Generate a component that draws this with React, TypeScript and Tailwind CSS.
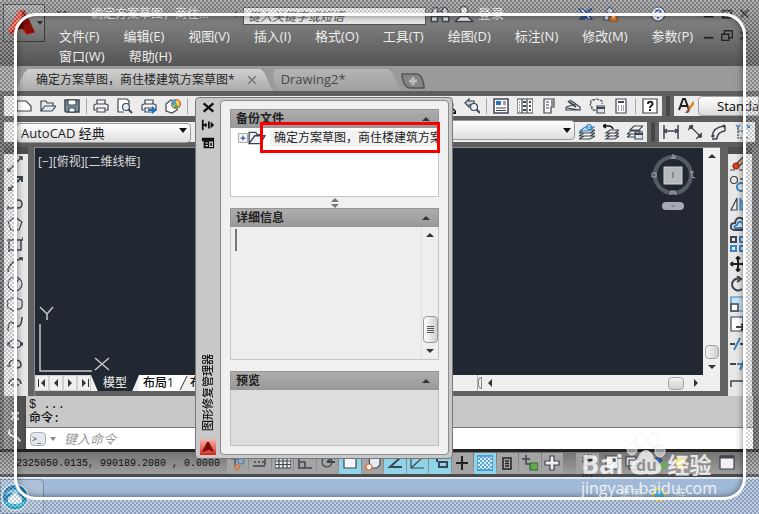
import type { ReactNode } from "react";

const ink = "#3f4650";
const blue = "#3b86c4";

type IconProps = { children: ReactNode; className?: string };

function Icon({ children, className = "size-4" }: IconProps) {
  return (
    <svg
      viewBox="0 0 16 16"
      className={`${className} shrink-0`}
      fill="none"
      stroke={ink}
      strokeWidth="1.2"
      aria-hidden="true"
    >
      {children}
    </svg>
  );
}

function Tool({ label, children }: { label: string; children: ReactNode }) {
  return (
    <button type="button" aria-label={label} className="flex h-5 w-6 shrink-0 items-center justify-center">
      <Icon>{children}</Icon>
    </button>
  );
}

function Sep() {
  return <span className="mx-[2px] h-4 w-px shrink-0 bg-[#a5a5a5]" />;
}

function Grip() {
  return <span className="h-5 w-3 shrink-0 border-x-4 border-[#646464] bg-[#474747]" />;
}

const menus = [
  "文件(F)",
  "编辑(E)",
  "视图(V)",
  "插入(I)",
  "格式(O)",
  "工具(T)",
  "绘图(D)",
  "标注(N)",
  "修改(M)",
  "参数(P)",
  "窗口(W)",
  "帮助(H)",
];

function Logo({ className }: { className: string }) {
  return (
    <svg viewBox="0 0 24 24" className={className} aria-hidden="true">
      <path d="M9 1h5l9 19-7 2-4-5-5 1-4 4-3-3z" fill="#b3180e" />
      <path d="M9 1h2l2 7-8 9-4 3-1-1z" fill="#e4513c" />
      <path d="M11 8l5 8-9 2z" fill="#5d0b08" />
      <path d="M14 1l9 19-7 1-5-13z" fill="#8a0f0a" />
    </svg>
  );
}

function Header() {
  return (
    <header className="flex min-h-[66px] bg-linear-to-b from-[#919191] via-[#757575] to-[#545454] text-[13px] text-[#eeeeee]">
      <button
        type="button"
        aria-label="应用程序菜单"
        className="mt-1 ml-[3px] flex h-[38px] w-[42px] shrink-0 items-center border border-[#3c3c3c] bg-linear-to-b from-[#a2a2a2] to-[#6d6d6d] pl-1"
      >
        <Logo className="size-7" />
        <svg viewBox="0 0 6 4" className="ml-px w-[6px]" aria-hidden="true">
          <path d="M0 0h6L3 4z" fill="#2a2f36" />
        </svg>
      </button>
      <div className="flex-1">
        <div className="flex h-[26px] items-center pt-[2px]">
          <svg viewBox="0 0 10 6" className="ml-3 w-[10px]" aria-hidden="true">
            <path d="M0 0h4L2 5zM6 0h4L8 5z" fill="#333" />
          </svg>
          <h1 className="ml-6 w-36 text-xs">确定方案草图，商住...</h1>
          <svg viewBox="0 0 4 6" className="mr-1 ml-auto w-1" aria-hidden="true">
            <path d="M0 0l4 3-4 3z" fill="#222" />
          </svg>
          <input
            aria-label="搜索"
            placeholder="键入关键字或短语"
            className="mt-1 h-[18px] w-[183px] border border-[#555] bg-[#e8e8e8] px-1 text-xs italic placeholder:text-[#555]"
          />
          <button type="button" aria-label="查找" className="ml-1">
            <Icon className="size-5">
              <path d="M1 14V8l2-5h3v11zM15 14V8l-2-5h-3v11zM6 6h4v4H6zM1 10h5M10 10h5" fill="#ddd" />
            </Icon>
          </button>
          <button type="button" className="ml-1 flex w-[68px] items-center gap-1 whitespace-nowrap">
            <Icon className="size-5">
              <circle cx="8" cy="5" r="3" fill="#eee" />
              <path d="M1 14l4-4h6l4 4z" fill="#eee" />
            </Icon>
            登录
          </button>
          <button type="button" aria-label="Exchange" className="ml-14">
            <Icon>
              <path d="M1 3h4l9 10h-4z" fill="#dbe8ff" stroke="#1d3b7c" />
              <path d="M14 3h-3L2 13h4z" fill="#3564b8" stroke="#1d3b7c" />
            </Icon>
          </button>
          <button type="button" aria-label="共享" className="ml-2">
            <Icon>
              <path d="M8 1l4 4-4 4-4-4zM2 9h5v5H2z" fill="#cfd9ea" stroke="#31456d" />
              <path d="M8 7h7v8H8z" fill="#e08026" stroke="#a34c0b" />
              <path d="M11.500 8v4" stroke="#fff" strokeWidth="2" />
            </Icon>
          </button>
          <button type="button" aria-label="帮助" className="ml-8">
            <Icon>
              <circle cx="8" cy="8" r="7" fill="#eef4ff" />
              <path d="M5.500 6.500c0-3 5-3 5 0 0 1.500-2.500 1.500-2.500 3.500m0 1v1.500" stroke="#2858b0" strokeWidth="2" />
            </Icon>
          </button>
          <div className="mr-3 ml-9 flex gap-1">
            <Icon className="size-[14px]">
              <path d="M2 11h11" stroke="#222" strokeWidth="2" />
            </Icon>
            <Icon className="size-[14px]">
              <path d="M3 12V4h10v8z" stroke="#222" strokeWidth="2" />
            </Icon>
            <Icon className="size-[14px]">
              <path d="M3 3l9 9M12 3l-9 9" stroke="#222" strokeWidth="2" />
            </Icon>
          </div>
        </div>
        <div className="flex">
          <nav className="flex flex-1 flex-wrap gap-x-6 pl-[14px] leading-5">
            {menus.map((m) => (
              <button type="button" key={m}>
                {m}
              </button>
            ))}
          </nav>
          <div className="flex h-5 items-center gap-1 pr-3">
            <Icon className="size-[14px]">
              <path d="M2 10h11" stroke="#222" strokeWidth="2" />
            </Icon>
            <Icon className="size-[14px]">
              <path d="M2 6h8v7H2zM5 6V2h9v8h-4" stroke="#222" strokeWidth="1.500" />
            </Icon>
            <Icon className="size-[14px]">
              <path d="M3 3l9 9M12 3l-9 9" stroke="#333" strokeWidth="2" />
            </Icon>
          </div>
        </div>
      </div>
    </header>
  );
}

function FileTabs() {
  return (
    <div className="flex h-[30px] items-start border-b-[5px] border-[#5e5e5e] bg-[#9a9a9a] pt-[3px] text-xs">
      <button
        type="button"
        className="ml-4 flex h-[22px] items-center gap-3 bg-linear-to-b from-[#d0d0d0] to-[#ababab] pr-4 pl-5 text-[#1f1f1f] [clip-path:polygon(12px_0,calc(100%-12px)_0,calc(100%-8px)_4px,100%_100%,0_100%,8px_4px)]"
      >
        确定方案草图，商住楼建筑方案草图*
        <Icon className="size-[10px]">
          <path d="M2 2l12 12M14 2L2 14" stroke="#777" strokeWidth="2.500" />
        </Icon>
      </button>
      <button
        type="button"
        className="h-[22px] w-32 bg-linear-to-b from-[#b4b4b4] to-[#a0a0a0] pl-2 text-left text-[13px] text-[#484848] [clip-path:polygon(2px_0,calc(100%-12px)_0,calc(100%-8px)_4px,100%_100%,6px_100%,0_8px)]"
      >
        Drawing2*
      </button>
      <button type="button" aria-label="新建图形" className="mt-1">
        <svg viewBox="0 0 24 16" className="h-4 w-6" aria-hidden="true">
          <path d="M1 1h14q7 0 8 14H10Q2 15 1 1z" fill="#858585" stroke="#555" strokeWidth="1.500" />
          <path d="M12 4v8M8 8h8" stroke="#bbb" strokeWidth="3" />
        </svg>
      </button>
    </div>
  );
}

function PlotPrinter() {
  return <path d="M4 6V2h8v4M3 12H1V7l2-1h10l2 1v5h-2M4 10h8v4H4z" fill="#f4f4f4" />;
}

function Toolbars() {
  return (
    <div className="flex flex-col gap-[6px] bg-[#5e5e5e] pb-[5px]">
      <div className="flex pl-1">
        <div className="flex h-5 flex-1 items-center bg-[#ececec] pl-2">
          <Tool label="新建">
            <path d="M1 3h9l5 5v5H1z" fill="#fff" />
          </Tool>
          <Tool label="打开">
            <path d="M1 13V3h5l1 2h6v3M1 13l4-5h11l-4 5z" fill="#e4ebf0" />
          </Tool>
          <Tool label="保存">
            <path d="M1 2h14v12H2l-1-1z" fill="#7f8fa3" strokeWidth="1.500" />
            <path d="M4 2h8v5H4zM5 10h6v4H5z" fill="#fff" />
          </Tool>
          <Sep />
          <Tool label="打印">
            <PlotPrinter />
          </Tool>
          <Tool label="打印预览">
            <path d="M12 6V3l-2-2H1v13h6" fill="#fff" />
            <circle cx="9" cy="9" r="3.500" fill="#e3f0f8" />
            <path d="M11.500 11.500L15 15" strokeWidth="2" />
          </Tool>
          <Tool label="发布">
            <PlotPrinter />
            <path d="M7 11h4V8l5 4-5 4v-3H7z" fill="#1f70c1" stroke="none" />
          </Tool>
          <Tool label="三维打印">
            <path d="M1 6l5-4 6 2v8l-5 3-6-2z" fill="#fff" />
            <circle cx="11" cy="6" r="4.500" fill="#f2c84b" stroke="#ce5149" />
            <path d="M11 1.500A4.500 4.500 0 0 0 7 8l4-2z" fill="#43a9cf" stroke="none" />
            <path d="M11 6l-3 4q4 2 6-1z" fill="#55a65a" stroke="none" />
          </Tool>
          <Sep />
          <span className="flex-1" />
          <Tool label="窗口缩放">
            <circle cx="9" cy="7" r="4" fill="#e9f3f8" />
            <path d="M12 10l3 3" strokeWidth="2" />
            <path d="M12 16h4v-4z" fill="#111" stroke="none" />
          </Tool>
          <Tool label="缩放上一个">
            <path d="M1 5l4-4v2h5v4H5v2z" fill="#c6d5e1" />
            <circle cx="10" cy="9" r="3.500" fill="#e9f3f8" />
            <path d="M12.500 11.500L16 15" strokeWidth="2" />
          </Tool>
          <Sep />
          <Tool label="特性">
            <path d="M1 1h14v14H1z" fill="#fff" strokeWidth="1.500" />
            <path d="M3 3h5v4H3z" fill="#2473c6" stroke="none" />
            <path d="M3 10h10M3 12.500h10M10 4h3M10 6h3" />
          </Tool>
          <Tool label="设计中心">
            <path d="M0 1h16v14H0z" fill="#fff" />
            <path d="M5 1v14M2 4h1M2 7h1M2 10h1M2 13h1M10 1v14" />
            <path d="M6 4h3M6 8h3M6 12h3M12 4h2M12 8h2M12 12h2" strokeWidth="2" />
          </Tool>
          <Tool label="工具选项板">
            <path d="M3 1h10v8h-3v6H3z" fill="#f8f8f8" />
            <path d="M5 4h3M5 7h3M5 10h3M11 2v6" />
          </Tool>
          <Tool label="图纸集">
            <path d="M5 2l3 2 7 5v3L2 10M1 9l10-3M1 9v3h13" fill="#eee" />
            <path d="M3 3l8 6" strokeWidth="2" />
          </Tool>
          <Tool label="标记集">
            <path d="M2 5q-1-4 3-3 3-2 5 0 4 0 3 4M2 5q-2 3 1 4-1 4 4 3" strokeDasharray="3 1" />
            <path d="M8 8h8v7H8z" fill="#e1e4e8" />
            <path d="M8 10h8" strokeWidth="2" />
          </Tool>
          <Tool label="计算器">
            <path d="M3 1h10v14H3z" fill="#fff" />
            <path d="M5 4h6" strokeWidth="2" />
            <path d="M5 8h1M8 8h1M10 8h1M5 10h1M8 10h1M10 10h1M5 12h1M8 12h1M10 12h1" />
          </Tool>
          <Sep />
          <Tool label="帮助">
            <path d="M1 1h14v14H1z" fill="#fff" />
            <path d="M6 6c0-3 4.500-3 4.500 0 0 1.500-2.500 1.500-2.500 4m0 1v2" stroke="#222" strokeWidth="2" />
          </Tool>
        </div>
        <Grip />
        <div className="flex h-5 items-center bg-[#ececec]">
          <Tool label="文字样式">
            <path d="M1 12L5 1h2l4 11M3 8h6" stroke="#222" strokeWidth="2" />
            <path d="M7 15l3-4 2 2-2 2z" fill="#8d5430" stroke="none" />
            <path d="M11 11l5-7" stroke="#d5842a" strokeWidth="2.500" />
          </Tool>
          <div className="h-5 w-[61px] overflow-hidden rounded-l border border-[#a4a4a4] bg-linear-to-b from-white to-[#dcdcdc] pl-[18px] text-[13px] leading-[18px]">
            Standard
          </div>
        </div>
      </div>
      <div className="flex pr-1 pl-1">
        <div className="flex h-5 flex-1 items-center justify-between bg-[#ececec] pl-3">
          <div className="relative">
            <select
              aria-label="工作空间"
              className="h-5 w-[175px] appearance-none rounded-sm border border-[#999] bg-linear-to-b from-white to-[#dedede] pl-1 text-[13px] leading-4 text-[#222]"
            >
              <option>AutoCAD 经典</option>
            </select>
            <svg viewBox="0 0 8 5" className="pointer-events-none absolute top-2 right-1 w-2" aria-hidden="true">
              <path d="M0 0h8L4 5z" fill="#111" />
            </svg>
          </div>
          <div className="flex items-center">
            <div className="relative">
              <select
                aria-label="图层"
                className="h-5 w-44 appearance-none rounded-sm border border-[#999] bg-linear-to-b from-white to-[#dedede]"
              />
              <svg viewBox="0 0 8 5" className="pointer-events-none absolute top-2 right-1 w-2" aria-hidden="true">
                <path d="M0 0h8L4 5z" fill="#111" />
              </svg>
            </div>
            <Tool label="图层置为当前">
              <path d="M0 12l5-3h11l-5 3zM0 9l5-3h11l-5 3zM0 15l5-3h11l-5 3z" fill="#f5f5f5" />
              <path d="M1 7l5-4h9l-5 4z" fill="#bfe0f5" stroke={blue} />
              <circle cx="10" cy="3" r="2.500" stroke={blue} />
            </Tool>
            <Tool label="上一个图层">
              <path d="M3 15l4-3h9l-4 3zM3 12l4-3h9l-4 3zM3 9l4-3h9l-4 3z" fill="#f1f1f1" />
              <path d="M0 2h6q3 0 4 3M3 0L0 2l3 2" strokeWidth="1.500" stroke="#111" />
            </Tool>
            <Tool label="图层状态">
              <path d="M0 13l4-3h9l-4 3zM0 10l4-3h9l-4 3zM3 6l4-4h9l-4 4z" fill="#f1f1f1" />
              <path d="M8 8h8v7H8z" fill="#dce5ed" />
              <path d="M8 10h8" strokeWidth="2" />
            </Tool>
          </div>
        </div>
        <Grip />
        <div className="flex h-5 items-center bg-[#ececec]">
          <Tool label="线性标注">
            <path d="M1 1v14M15 1v14M2 7h12M4 5L1 7l3 2M12 5l3 2-3 2" strokeWidth="1.500" />
          </Tool>
          <Tool label="对齐标注">
            <path d="M1 6l5-5M9 15l6-6M4 3l9 9" />
            <circle cx="4" cy="3" r="1.500" fill={ink} />
            <circle cx="13" cy="12" r="1.500" fill={ink} />
          </Tool>
          <Tool label="弧长标注">
            <path d="M1 13q1-10 12-11M6 15q0-7 8-8M1 15h5M14 2v5" strokeWidth="1.500" />
            <circle cx="2" cy="12" r="1" fill={ink} />
            <circle cx="13" cy="2" r="1" fill={ink} />
          </Tool>
          <Tool label="坐标标注">
            <path d="M3 4v10h11M3 7h7v7" strokeDasharray="2 1" />
            <path d="M12 1l3 3M15 1l-3 3M1 1l2 2 2-2M3 3v2" stroke={blue} strokeWidth="1.500" />
          </Tool>
        </div>
      </div>
    </div>
  );
}

type SideTool = { label: string; icon: ReactNode };

const drawTools: SideTool[] = [
  { label: "直线", icon: <path d="M1 15l6-6M10 6l5-5M1 12v3h3M12 1h3v3" strokeWidth="1.500" /> },
  { label: "构造线", icon: <path d="M2 14l4-4M10 6l5-5M10 1h5v5M2 11v3h3" strokeWidth="2" /> },
  { label: "多段线", icon: <path d="M1 12h10q4 0 4-4t-4-4H8M1 10v4" strokeWidth="1.500" /> },
  { label: "多边形", icon: <path d="M8 1l7 5-3 8H4L1 6z" fill="#eef1f4" /> },
  { label: "矩形", icon: <path d="M2 4h12v10H2zM0 4h4M12 4h4v-3M2 12v4" strokeWidth="1.500" /> },
  { label: "圆弧", icon: <path d="M1 15Q3 4 15 3M1 13v3M12 2h4v3" strokeWidth="1.500" /> },
  {
    label: "圆",
    icon: (
      <>
        <circle cx="8" cy="8" r="7" fill="#eef1f4" />
        <path d="M8 8l4-5" />
      </>
    ),
  },
  { label: "修订云线", icon: <path d="M4 3q4-4 7 0 5 0 4 4 1 7-5 6-4 4-6 0-5-1-3-5-2-4 3-5z" fill="#eef1f4" /> },
  { label: "样条曲线", icon: <path d="M1 15C1 3 6 6 8 9s7 2 7-8" strokeWidth="1.500" /> },
  {
    label: "椭圆",
    icon: (
      <>
        <ellipse cx="8" cy="8" rx="6.500" ry="4" fill="#eef1f4" />
        <path d="M0 8h3M13 8h3" strokeWidth="3" />
      </>
    ),
  },
  { label: "椭圆弧", icon: <path d="M2 10q0-6 6-6t6 5q0 3-5 3M0 10h4" strokeWidth="1.500" /> },
  { label: "插入块", icon: <path d="M2 8q0-5 6-5t6 5M4 9h8" strokeWidth="1.500" /> },
];

const modifyTools: SideTool[] = [
  {
    label: "删除",
    icon: (
      <>
        <path d="M5 9l8-8 3 3-8 7z" fill="#d4b06a" />
        <circle cx="6" cy="10" r="3" fill="#d9411d" stroke="#8f2c15" />
        <path d="M0 14h5M9 14h6" />
      </>
    ),
  },
  {
    label: "复制对象",
    icon: (
      <>
        <circle cx="4" cy="4" r="3.500" />
        <circle cx="11" cy="11" r="4" stroke={blue} strokeWidth="2" />
        <path d="M10 3h5" />
      </>
    ),
  },
  {
    label: "镜像",
    icon: (
      <>
        <path d="M7 2v12H1z" fill="#e9e9e9" />
        <path d="M10 2v12h6z" fill="#75b5e6" stroke={blue} />
      </>
    ),
  },
  {
    label: "偏移",
    icon: (
      <>
        <path d="M4 14q-4-1-3-4 0-3 4-3 1-6 6-5 5 2 4 12z" strokeWidth="2" />
        <path d="M5 12q-2-2 2-3 1-4 4-3t2 6z" stroke={blue} strokeWidth="2" />
      </>
    ),
  },
  {
    label: "阵列",
    icon: (
      <>
        <path d="M1 1h5v5H1z" strokeWidth="2" />
        <path d="M10 1h5v5h-5zM1 10h5v5H1zM10 10h5v5h-5z" stroke={blue} strokeWidth="2" />
      </>
    ),
  },
  {
    label: "移动",
    icon: (
      <path d="M8 1v14M1 8h14M6 3l2-2 2 2M6 13l2 2 2-2M3 6L1 8l2 2M13 6l2 2-2 2" stroke="#222" strokeWidth="2" />
    ),
  },
  { label: "旋转", icon: <path d="M12 13A6 6 0 1 1 9 2.500M7 0l4 3-4 3" strokeWidth="2" /> },
  {
    label: "比例缩放",
    icon: (
      <>
        <path d="M1 1h14v14H1z" fill="#c8e2f5" stroke={blue} />
        <path d="M1 8h7v7H1z" fill="#fff" strokeWidth="1.500" />
      </>
    ),
  },
  {
    label: "拉伸",
    icon: (
      <>
        <path d="M1 1h12v14H1z" fill="#fff" />
        <path d="M9 1h6v14" stroke={blue} />
        <path d="M6 11h7M11 8l4 3-4 3" stroke="#111" strokeWidth="1.500" />
      </>
    ),
  },
  {
    label: "修剪",
    icon: (
      <>
        <path d="M0 8h5M10 8h6" strokeWidth="2" />
        <path d="M4 14l6-12" stroke={blue} strokeWidth="2" />
      </>
    ),
  },
  {
    label: "延伸",
    icon: (
      <>
        <path d="M0 8h6" strokeWidth="2" />
        <path d="M7 8h5M10 14l5-12" stroke={blue} strokeWidth="2" />
      </>
    ),
  },
  { label: "打断", icon: <path d="M1 11V5h14v6" strokeWidth="1.500" /> },
];

function SideTools({ tools, label, className }: { tools: SideTool[]; label: string; className: string }) {
  return (
    <div role="toolbar" aria-label={label} className={`${className} shrink-0 border-t-[7px] border-[#4e4e4e] bg-[#e8e8e8]`}>
      {tools.map((t) => (
        <button
          type="button"
          key={t.label}
          aria-label={t.label}
          className="flex h-5 w-full items-center overflow-hidden"
        >
          <Icon>{t.icon}</Icon>
        </button>
      ))}
    </div>
  );
}

function Arrow({ d }: { d: string }) {
  return (
    <svg viewBox="0 0 8 8" className="size-2 shrink-0" aria-hidden="true">
      <path d={d} fill="#333" />
    </svg>
  );
}

const up = "M0 6l4-4 4 4z";
const down = "M0 2l4 4 4-4z";
const left = "M6 0L2 4l4 4z";
const right = "M2 0l4 4-4 4z";

function Workspace() {
  return (
    <main className="flex flex-1 bg-[#626262] pl-1">
      <SideTools tools={drawTools} label="绘图" className="w-6 pl-[3px]" />
      <div className="ml-[6px] flex flex-1 flex-col border-t border-l border-[#8a8a8a] pb-[5px]">
        <div className="flex flex-1">
          <div className="flex flex-1 items-stretch justify-between bg-[#222831] text-[#d9d9d9]">
            <div className="flex flex-col justify-between pt-1 pl-[3px]">
              <p className="text-xs leading-5">[−][俯视][二维线框]</p>
              <svg
                viewBox="0 0 76 70"
                className="w-[76px]"
                fill="none"
                stroke="#c8c8c8"
                strokeWidth="1.500"
                aria-hidden="true"
              >
                <path d="M2 2l7 7 6-7M9 9v6M2 19v47h52M57 53l14 12M71 53L57 65" />
              </svg>
            </div>
            <svg viewBox="0 0 44 60" className="mt-1 mr-2 h-[60px] w-11" fill="none" aria-hidden="true">
              <circle cx="22" cy="23" r="18" stroke="#555c65" strokeWidth="4" />
              <rect x="13" y="15" width="18" height="17" fill="#b5b9bc" stroke="#cfd2d4" />
              <path d="M22 20v6" stroke="#555" />
              <path d="M22 2v5M19 6h6M23 4h2M19 43l1-4h4l1 4M20 41h4M1 21h4v4H1zM39 20h4M41 20v5l3 1" stroke="#a9adb2" />
              <rect x="11" y="50" width="22" height="8" rx="4" fill="#a6a9b6" />
              <path d="M20 53l2 2 2-2" stroke="#777" />
            </svg>
          </div>
          <div className="flex w-[17px] flex-col items-center bg-[#f0f0f0] pt-1 pb-1">
            <Arrow d={up} />
            <div className="mt-auto mb-1 h-[14px] w-[14px] rounded-sm border border-[#a5a5a5] bg-linear-to-r from-[#f4f4f4] to-[#cfcfcf]" />
            <Arrow d={down} />
          </div>
        </div>
        <div className="flex h-4 items-stretch bg-[#efefef] text-xs leading-4 font-medium text-[#111]">
          <div className="flex">
            {[left, left, right, right].map((d, i) => (
              <button
                type="button"
                key={i}
                aria-label={["第一个", "上一个", "下一个", "最后一个"][i]}
                className="flex w-[14px] items-center justify-center border border-[#d0d0d0]"
              >
                {i === 0 && <span className="h-2 w-px bg-[#333]" />}
                <Arrow d={d} />
                {i === 3 && <span className="h-2 w-px bg-[#333]" />}
              </button>
            ))}
          </div>
          <button
            type="button"
            className="w-[48px] bg-[#222831] text-[#ddd] [clip-path:polygon(0_0,100%_0,86%_100%,14%_100%)]"
          >
            模型
          </button>
          <button type="button" className="bg-white pr-1 pl-1">
            布局1
          </button>
          <svg viewBox="0 0 10 16" className="w-[10px]" aria-hidden="true">
            <path d="M0 0h9L2 16H0z" fill="#fff" />
            <path d="M9 1L2 15" stroke="#333" />
          </svg>
          <button type="button" className="pl-[2px]">
            布局2
          </button>
          <div className="ml-auto flex w-[243px] items-center border-l border-[#aaa]">
            <span className="mr-1 h-3 w-1 rounded-l border border-[#888]" />
            <Arrow d={left} />
            <div className="mr-2 ml-auto h-[13px] w-4 rounded-sm border border-[#a5a5a5] bg-linear-to-b from-[#f4f4f4] to-[#cfcfcf]" />
            <Arrow d={right} />
            <span className="w-5" />
          </div>
        </div>
      </div>
      <span className="w-2" />
      <SideTools tools={modifyTools} label="修改" className="w-[24px] pl-[2px]" />
      <span className="w-[7px] bg-[#6a6a6a]" />
    </main>
  );
}

function CommandLine() {
  return (
    <section aria-label="命令行" className="flex border-b-[3px] border-[#222] bg-[#5e5e5e] pr-[6px] pl-1">
      <div className="flex w-[22px] flex-col items-center gap-2 bg-linear-to-r from-[#8a8a8a] to-[#4a4a4a] pt-[15px]">
        <Icon className="size-[10px]">
          <path d="M2 2l12 12M14 2L2 14" stroke="#eee" strokeWidth="3" />
        </Icon>
        <Icon className="size-[14px]">
          <path d="M2 1q-2 4 1 6t5 0l6 7M6 1q3 2 2 6" stroke="#eee" strokeWidth="2.500" />
        </Icon>
      </div>
      <div className="flex-1">
        <div className="h-8 border-b border-[#777] bg-[#c8c8c8] pt-[2px] pl-[3px] font-['Liberation_Mono','Noto_Sans_CJK_SC',monospace] text-xs leading-[14px] font-medium text-[#111]">
          <p>$ ...</p>
          <p>命令:</p>
        </div>
        <label className="flex h-[21px] items-center bg-white pl-1">
          <span className="flex h-[14px] w-4 items-center rounded-sm border border-[#a8b0b8] bg-[#e4e8ec] pl-px text-[9px] text-[#333]">
            &gt;_
          </span>
          <svg viewBox="0 0 6 4" className="mx-1 w-[6px]" aria-hidden="true">
            <path d="M0 0h6L3 4z" fill="#888" />
          </svg>
          <input
            aria-label="键入命令"
            placeholder="键入命令"
            className="ml-1 h-5 flex-1 text-[13px] italic placeholder:text-[#999]"
          />
        </label>
      </div>
    </section>
  );
}

const toggles: { label: string; on?: boolean; icon: ReactNode }[] = [
  {
    label: "推断约束",
    icon: (
      <>
        <path d="M1 4h8M5 4v8" />
        <circle cx="11" cy="6" r="3" stroke={blue} />
        <circle cx="7" cy="12" r="2.500" stroke="#e07030" />
      </>
    ),
  },
  { label: "捕捉模式", icon: <path d="M1 11h12M2 7h2M6 7h2M10 7h2M13 3v7" strokeWidth="1.500" /> },
  {
    label: "栅格显示",
    icon: <path d="M0 2h16v11H0zM4 2v11M8 2v11M12 2v11M0 6h16M0 9.500h16" fill="#e9e9e9" />,
  },
  { label: "正交模式", icon: <path d="M2 1v12h13M2 7h6v6" strokeWidth="1.500" /> },
  {
    label: "极轴追踪",
    icon: (
      <>
        <circle cx="7" cy="7" r="5" />
        <path d="M7 7h8M7 7l6-5" strokeWidth="2" />
      </>
    ),
  },
  { label: "对象捕捉", on: true, icon: <path d="M2 1h12v12H2z" fill="#f5f5ff" /> },
  {
    label: "三维对象捕捉",
    icon: (
      <>
        <path d="M4 3h11v7l-3 3H5z" fill="#e5e9f2" />
        <circle cx="4" cy="12" r="3" stroke="#e8622d" fill="#fff" />
      </>
    ),
  },
  { label: "对象捕捉追踪", on: true, icon: <path d="M14 2L3 12h12" strokeWidth="2" /> },
  {
    label: "动态 UCS",
    on: true,
    icon: (
      <>
        <path d="M2 1v12h13M2 13L13 3" />
        <path d="M11 3l2 2" stroke="#d98726" strokeWidth="2" />
      </>
    ),
  },
  { label: "动态输入", on: true, icon: <path d="M1 3h8M5 1v6M7 7h8v5H7z" strokeWidth="2" /> },
  { label: "显示线宽", icon: <path d="M8 1v14M2 8h12" strokeWidth="2" stroke="#222" /> },
  {
    label: "显示透明度",
    on: true,
    icon: (
      <>
        <path d="M0 1h16v14H0z" fill="#d6effb" stroke={blue} strokeWidth="1.500" />
        <path
          d="M1 5l3-3M1 9l7-7M1 13l11-11M4 14L15 3M8 14l7-7M12 14l3-3M4 2l11 11M8 2l7 7M1 3l11 11M1 7l7 7M12 2l3 3M1 11l3 3"
          stroke="#5aa5d4"
          strokeWidth="1"
        />
      </>
    ),
  },
  {
    label: "快捷特性",
    icon: <path d="M4 3h8v11H4zM6 6h4M6 8.500h4M6 11h4" strokeWidth="1.500" stroke="#222" />,
  },
  {
    label: "选择循环",
    icon: (
      <>
        <path d="M0 4h8M4 0v9h4" strokeWidth="1.500" />
        <path d="M8 8h8v7H8z" fill="#62a752" stroke="#2f6b2b" />
      </>
    ),
  },
  { label: "注释监视器", icon: <path d="M6 1h4v5h5v4h-5v5H6v-5H1V6h5z" fill="#eee" /> },
];

function StatusBar() {
  return (
    <footer className="flex h-[25px] items-center border-b-[3px] border-[#4b4b4b] bg-linear-to-b from-[#757575] to-[#9d9d9d] pl-4">
      <output className="w-[211px] whitespace-pre font-['Liberation_Mono',monospace] text-[10px] text-[#111]">
        2325050.0135, 990189.2080 , 0.0000
      </output>
      {toggles.map((t) => (
        <button
          type="button"
          key={t.label}
          aria-label={t.label}
          aria-pressed={!!t.on}
          className={
            t.on
              ? "mr-px flex h-[21px] w-[21px] flex-1 items-center justify-center bg-[#8fd4e8]"
              : "mr-px flex h-[21px] w-[21px] flex-1 items-center justify-center bg-[#a4a4a4]"
          }
        >
          <Icon>{t.icon}</Icon>
        </button>
      ))}
      <div className="ml-3 flex h-[21px] w-[183px] items-center gap-[5px] text-xs text-[#222]">
        <button type="button" className="h-full w-[30px] bg-[#a0a0a0]">
          模型
        </button>
        <Icon>
          <path d="M2 1h12v13H2zM5 11l6-7M8 4h3v3" fill="#eee" />
        </Icon>
        <Icon>
          <path d="M1 2h10v9H1zM4 5h11v9H4z" fill="#ddd" />
        </Icon>
        <span className="flex-1" />
        <Icon>
          <path d="M2 5q5-5 9 0l-4 4z" fill="#2a67b4" />
          <path d="M7 11l3 3 6-7" stroke="#5cba32" strokeWidth="2.500" />
        </Icon>
        <Icon>
          <path d="M5 10q-3-4 0-7t6 0 0 7v4H5z" fill="#efe58c" stroke="#b5a545" />
        </Icon>
        <span className="w-7" />
        <Icon className="mr-6 size-4">
          <path d="M1 1h14v13H1z" fill="#f1f1f6" />
          <path d="M1 2h14" strokeWidth="3" />
        </Icon>
      </div>
    </footer>
  );
}

function Taskbar() {
  return (
    <div className="flex h-[37px] items-start justify-between border-t-2 border-[#dfe7ef] bg-linear-to-b from-[#9fb9d6] to-[#a4bad8]">
      <button
        type="button"
        aria-label="开始"
        className="flex h-[35px] w-11 items-center rounded-r-sm border border-[#7690ad] bg-[#adc2d8]"
      >
        <svg viewBox="0 0 28 28" className="size-7" aria-hidden="true">
          <circle cx="14" cy="14" r="13" fill="#1d7fb4" stroke="#d6eef9" strokeWidth="1.500" />
          <path d="M3 12q11-12 22 0-11-4-22 0z" fill="#7cc7ea" />
          <path d="M7 15l7-6 7 6v6H7z" fill="#eaf6fb" />
          <path d="M4 19q10 8 20 0" stroke="#33c0df" strokeWidth="3" fill="none" />
        </svg>
      </button>
      <div className="mt-2 mr-[72px] flex items-center gap-2 text-xs leading-4 text-[#dbe5ef]">
        <span>桌面</span>
        <Icon>
          <circle cx="8" cy="8" r="6" fill="#51b7e4" stroke="#e4c645" strokeWidth="2" />
        </Icon>
        <span>库</span>
      </div>
    </div>
  );
}

function GroupHeader({ title }: { title: string }) {
  return (
    <h2 className="flex h-[19px] items-center justify-between border border-[#969696] bg-linear-to-b from-[#adadad] to-[#999999] pr-2 pl-[5px] text-xs font-bold text-[#222]">
      {title}
      <Arrow d={up} />
    </h2>
  );
}

function RecoveryPalette() {
  return (
    <section
      aria-label="图形修复管理器"
      className="absolute top-[97px] left-[195px] flex w-[258px] rounded-sm border border-[#777] bg-[#c9c9c9] pr-[3px] pb-[3px]"
    >
      <div className="flex w-6 shrink-0 flex-col items-center pt-[3px]">
        <button type="button" aria-label="关闭">
          <Icon className="size-[13px]">
            <path d="M2 3l12 10M14 3L2 13" stroke="#111" strokeWidth="3" />
          </Icon>
        </button>
        <button type="button" aria-label="自动隐藏" className="mt-1">
          <Icon className="size-[14px]">
            <path d="M2 2v12M2 8h5M9 4v8" stroke="#111" strokeWidth="2" />
            <path d="M3 8l3-3v6zM15 8l-4-4v8z" fill="#111" stroke="none" />
          </Icon>
        </button>
        <button type="button" aria-label="选项" className="mt-1">
          <Icon className="size-[14px]">
            <path d="M1 2h14v12H3V6H1z" fill="#111" stroke="none" />
            <path d="M5 8h3M5 11h3M10 7h3v5h-3z" stroke="#ddd" />
          </Icon>
        </button>
        <span className="mt-auto rotate-180 text-[11px] leading-4 font-medium text-[#111] [text-orientation:sideways] [writing-mode:vertical-rl]">
          图形修复管理器
        </span>
        <span className="mt-2 flex size-4 items-center justify-center bg-linear-to-b from-[#f4b3ae] to-[#cf1f1d]">
          <svg viewBox="0 0 16 16" className="size-4" aria-hidden="true">
            <path d="M2 13L7 3h2l5 10-5-2z" fill="#7c0808" />
          </svg>
        </span>
      </div>
      <div className="mt-[2px] min-w-0 flex-1 rounded border border-[#8b8b8b] bg-[#f0f0f0] px-[9px] py-2">
        <GroupHeader title="备份文件" />
        <div className="relative h-[69px] border border-t-0 border-[#c6c6c6] bg-white">
          <div className="flex h-5 items-center overflow-hidden whitespace-nowrap pl-[7px] text-xs text-[#222]">
            <Icon className="size-[10px]">
              <path d="M1 1h14v14H1z" fill="#fff" stroke="#999" strokeWidth="1.500" />
              <path d="M8 4v8M4 8h8" stroke="#2c57a8" strokeWidth="2" />
            </Icon>
            <span className="w-[5px] border-t border-dotted border-[#999]" />
            <Icon className="size-[18px]">
              <path d="M1 13V3h6l1 2h4M1 13L6 6h9l-4 7z" fill="#eef2f4" />
            </Icon>
            <a href="#draft" className="ml-1 bg-[#f2f2f2] pl-1">
              确定方案草图，商住楼建筑方案草图
            </a>
          </div>
          <div className="absolute -top-[6px] -right-[2px] h-[31px] w-[180px] border-[3px] border-[#f80000]" />
        </div>
        <div className="flex h-[11px] items-center justify-center">
          <svg viewBox="0 0 8 10" className="h-[10px] w-2" aria-hidden="true">
            <path d="M0 4l4-4 4 4zM0 6h8l-4 4z" fill="#777" />
          </svg>
        </div>
        <GroupHeader title="详细信息" />
        <div className="relative flex h-[133px] border border-t-0 border-[#c6c6c6] bg-[#eeeeee]">
          <textarea
            aria-label="详细信息"
            readOnly
            className="min-w-0 flex-1 resize-none border-0 bg-transparent text-xs outline-none"
          />
          <div className="flex w-[17px] flex-col items-center border-l border-[#e0e0e0] py-1">
            <Arrow d={up} />
            <div className="mt-auto mb-1 flex h-[27px] w-[15px] flex-col items-center justify-center gap-px rounded-sm border border-[#999] bg-linear-to-r from-white to-[#d0d0d0]">
              <span className="h-px w-[7px] bg-[#555]" />
              <span className="h-px w-[7px] bg-[#555]" />
              <span className="h-px w-[7px] bg-[#555]" />
              <span className="h-px w-[7px] bg-[#555]" />
            </div>
            <Arrow d={down} />
          </div>
          <span className="absolute top-[2px] left-1 h-[22px] w-[2px] bg-[#777]" />
        </div>
        <div className="mt-[11px]">
          <GroupHeader title="预览" />
          <div className="h-14 border border-t-0 border-[#c0c0c0] bg-[#dddddd]" />
        </div>
      </div>
    </section>
  );
}

// White rounded frame with a woven texture around it
function Frame() {
  return (
    <div className="pointer-events-none absolute inset-0">
      <svg className="size-full" aria-hidden="true">
        <defs>
          <pattern id="weave" width="4" height="4" patternUnits="userSpaceOnUse">
            <rect width="2" height="2" fill="#ffffff" fillOpacity="0.300" />
            <rect x="2" y="2" width="2" height="2" fill="#ffffff" fillOpacity="0.300" />
            <rect x="2" width="2" height="2" fill="#404050" fillOpacity="0.220" />
            <rect y="2" width="2" height="2" fill="#404050" fillOpacity="0.220" />
          </pattern>
          <mask id="ring">
            <rect width="100%" height="100%" fill="#fff" />
            <rect x="15" y="14" rx="20" className="h-[calc(100%-30px)] w-[calc(100%-30px)]" fill="#000" />
          </mask>
        </defs>
        <rect width="100%" height="100%" fill="url(#weave)" mask="url(#ring)" />
      </svg>
      <div className="absolute top-[13px] right-[13px] bottom-[14px] left-[14px] rounded-[22px] border-[3px] border-white shadow-[inset_0_0_7px_rgba(0,0,0,0.5)]" />
    </div>
  );
}

function Watermark() {
  return (
    <div className="pointer-events-none absolute right-[42px] bottom-[16px] text-white/80">
      <div className="flex items-end text-[27px] leading-7 font-bold">
        <span>Bai</span>
        <svg viewBox="0 0 40 44" className="mb-[2px] h-11 w-11" fill="#ffffff" fillOpacity="0.750" aria-hidden="true">
          <g fillOpacity="0.500" stroke="#eee" strokeOpacity="0.800">
            <ellipse cx="6" cy="17" rx="5" ry="6" />
            <ellipse cx="15" cy="8" rx="5" ry="7" />
            <ellipse cx="27" cy="8" rx="5" ry="7" />
            <ellipse cx="34" cy="19" rx="5" ry="6" />
          </g>
          <path d="M20 18q5 0 8 8 9 6 7 12-3 6-15 4-13 2-15-4-1-6 7-12 3-8 8-8z" />
          <text x="10" y="39" fontSize="16" fill="#777">
            du
          </text>
        </svg>
        <span className="text-[22px]">经验</span>
      </div>
      <p className="text-base leading-5">jingyan.baidu.com</p>
    </div>
  );
}

export default function App() {
  return (
    <div className="relative flex min-h-screen flex-col overflow-hidden bg-[#5e5e5e] font-['Open_Sans','Noto_Sans_CJK_SC',sans-serif]">
      <Header />
      <FileTabs />
      <Toolbars />
      <Workspace />
      <CommandLine />
      <StatusBar />
      <Taskbar />
      <RecoveryPalette />
      <Frame />
      <Watermark />
    </div>
  );
}
